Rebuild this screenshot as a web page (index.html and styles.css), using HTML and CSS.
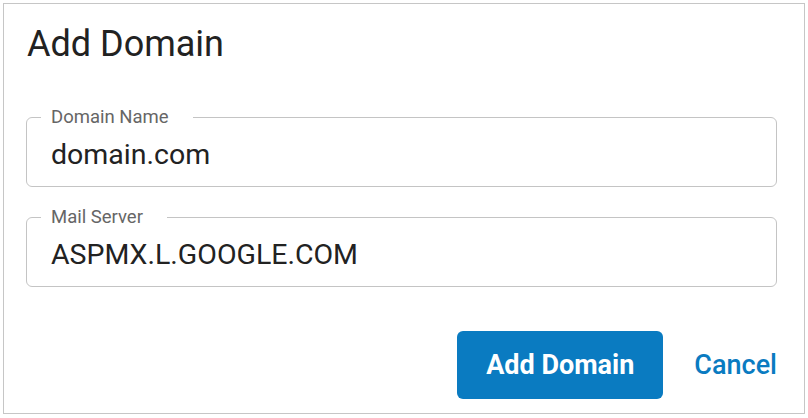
FILE: index.html
```html
<!DOCTYPE html>
<html lang="en">
<head>
  <meta charset="UTF-8" />
  <meta name="viewport" content="width=device-width, initial-scale=1.0"/>
  <title>Add Domain</title>
  <link rel="stylesheet" href="styles.css">
</head>
<body>

  <div class="dialog">
    <h2 class="dialog-title">Add Domain</h2>

    <fieldset class="field">
      <legend>Domain Name</legend>
      <input type="text" value="domain.com" />
    </fieldset>

    <fieldset class="field field-second">
      <legend>Mail Server</legend>
      <input type="text" value="ASPMX.L.GOOGLE.COM" />
    </fieldset>

    <div class="actions">
      <button class="btn-primary">Add Domain</button>
      <a href="#" class="btn-link">Cancel</a>
    </div>
  </div>

</body>
</html>
```

FILE: styles.css
```css
body {
  font-family: Roboto, "Liberation Sans", Arial, sans-serif;
  background: #fff;
  color: #222;
  margin: 0;
  padding: 3px;
}

.dialog {
  width: 802px;
  height: 411px;
  box-sizing: border-box;
  border: 1px solid #c6c6c6;
  padding: 19px 27px 0 22px;
}

.dialog-title {
  font-size: 36px;
  font-weight: 400;
  line-height: 42px;
  margin: 0 0 42px 1px;
  color: #222;
}

.field {
  margin: 0;
  padding: 0 14px 7px;
  border: 1px solid #c4c4c4;
  border-radius: 6px;
}

.field legend {
  font-size: 18.5px;
  line-height: 20px;
  color: #666;
  padding: 0 24px 0 10px;
}

.field input {
  display: block;
  width: 100%;
  height: 50px;
  box-sizing: border-box;
  margin-top: 2px;
  padding: 0 10px;
  border: none;
  outline: none;
  font-family: inherit;
  font-size: 28.5px;
  color: #222;
  background: transparent;
}

.field-second {
  margin-top: 20px;
}

.actions {
  display: flex;
  justify-content: flex-end;
  align-items: center;
  margin-top: 44px;
}

.btn-primary {
  height: 68px;
  padding: 0 29px;
  border: none;
  border-radius: 6px;
  background-color: #0a7bc1;
  color: #fff;
  font-family: inherit;
  font-size: 27px;
  font-weight: 700;
  cursor: pointer;
}

.btn-link {
  margin-left: 31px;
  color: #0a7bc1;
  font-size: 27px;
  font-weight: 500;
  text-decoration: none;
}
```
